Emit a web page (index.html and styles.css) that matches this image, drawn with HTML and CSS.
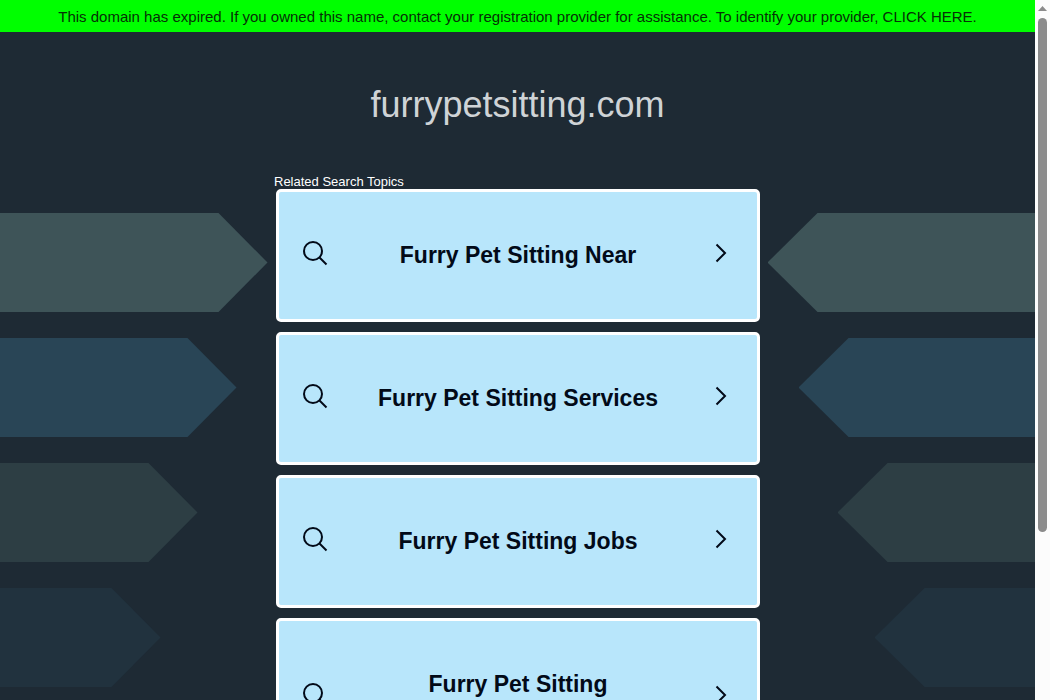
FILE: index.html
```html
<!DOCTYPE html>
<html lang="en">
<head>
<meta charset="utf-8">
<title>furrypetsitting.com</title>
<link rel="stylesheet" href="styles.css">
</head>
<body>
<svg class="sprite" aria-hidden="true">
  <symbol id="search" viewBox="0 0 26 26"><circle cx="11" cy="11" r="9" /><path d="M17.5 17.5 24.5 24.5" /></symbol>
  <symbol id="chevron" viewBox="0 0 12 20"><path d="M1.5 1.5 10 10 1.5 18.5" /></symbol>
</svg>
<div class="shell">
  <div class="page">
    <div class="backdrop" aria-hidden="true">
      <div class="band band-1"><span class="arrow"></span><span class="arrow arrow-left"></span></div>
      <div class="band band-2"><span class="arrow"></span><span class="arrow arrow-left"></span></div>
      <div class="band band-3"><span class="arrow"></span><span class="arrow arrow-left"></span></div>
      <div class="band band-4"><span class="arrow"></span><span class="arrow arrow-left"></span></div>
    </div>
    <header class="notice">This domain has expired. If you owned this name, contact your registration provider for assistance. To identify your provider, <a href="#">CLICK HERE.</a></header>
    <main class="content">
      <h1 class="domain">furrypetsitting.com</h1>
      <h2 class="caption">Related Search Topics</h2>
      <nav class="topics">
        <a class="topic" href="#"><svg class="icon-search"><use href="#search"/></svg><span class="label">Furry Pet Sitting Near</span><svg class="icon-chevron"><use href="#chevron"/></svg></a>
        <a class="topic" href="#"><svg class="icon-search"><use href="#search"/></svg><span class="label">Furry Pet Sitting Services</span><svg class="icon-chevron"><use href="#chevron"/></svg></a>
        <a class="topic" href="#"><svg class="icon-search"><use href="#search"/></svg><span class="label">Furry Pet Sitting Jobs</span><svg class="icon-chevron"><use href="#chevron"/></svg></a>
        <a class="topic" href="#"><svg class="icon-search"><use href="#search"/></svg><span class="label label-tall">Furry Pet Sitting</span><svg class="icon-chevron"><use href="#chevron"/></svg></a>
      </nav>
    </main>
  </div>
  <div class="scrollbar" aria-hidden="true"><span class="scroll-up"></span><span class="thumb"></span></div>
</div>
</body>
</html>
```
FILE: styles.css
```css
* { box-sizing: border-box; }
body {
  margin: 0;
  font-family: "Liberation Sans", Arial, sans-serif;
}
.sprite { display: none; }
.shell {
  display: grid;
  grid-template-columns: 1fr 15px;
  height: 100vh;
  overflow: hidden;
}
.page {
  position: relative;
  overflow: hidden;
  background: #1e2a34;
}

/* Arrow bands behind the content */
.backdrop {
  position: absolute;
  inset: 0;
  display: flex;
  flex-direction: column;
  gap: 26px;
  padding-top: 213px;
}
.band {
  display: flex;
  flex: none;
  height: 99px;
}
.arrow {
  flex: 1;
  background: currentColor;
  clip-path: polygon(0 0, calc(100% - 49px) 0, 100% 50%, calc(100% - 49px) 100%, 0 100%);
}
.arrow-left {
  clip-path: polygon(50px 0, 100% 0, 100% 100%, 50px 100%, 0 50%);
}
.band-1 { gap: 500px; color: #3e5458; }
.band-2 { gap: 562px; color: #294556; }
.band-3 { gap: 640px; color: #2d3e44; }
.band-4 { gap: 714px; color: #21323e; }

.notice {
  position: relative;
  padding: 9px 8px 7px;
  background: #00ff00;
  color: #063006;
  font-size: 15px;
  line-height: 16px;
  text-align: center;
}
.notice a { color: inherit; text-decoration: none; }

.content {
  position: relative;
  max-width: 487px;
  margin: 0 auto;
}
.domain {
  margin: 0;
  padding: 53px 0 49px;
  color: #cfd3d6;
  font-size: 36px;
  font-weight: 400;
  line-height: 40px;
  text-align: center;
}
.caption {
  margin: 0;
  color: #fff;
  font-size: 13px;
  font-weight: 400;
  line-height: 15px;
}
.topics {
  display: grid;
  gap: 10px;
  padding: 0 1px 0 2px;
}
.topic {
  display: grid;
  grid-template-columns: 34px 1fr 27px;
  align-items: center;
  padding: 50px 30px 50px 23px;
  border: 3px solid #fff;
  border-radius: 5px;
  background: #b8e6fb;
  color: #020a18;
  text-decoration: none;
}
.label {
  font-size: 23px;
  font-weight: 700;
  line-height: 27px;
  text-align: center;
}
.label-tall { min-height: 54px; }
.topic svg {
  margin: -3px 0 3px;
  fill: none;
  stroke: currentColor;
  stroke-width: 2;
}
.icon-search { width: 26px; height: 26px; }
.icon-chevron { width: 12px; height: 20px; justify-self: end; }

.scrollbar {
  display: flex;
  flex-direction: column;
  align-items: center;
  gap: 7px;
  padding-top: 6px;
  background: #fcfcfc;
}
.scroll-up {
  width: 9px;
  height: 5px;
  background: #8b8b8b;
  clip-path: polygon(50% 0, 100% 100%, 0 100%);
}
.thumb {
  width: 9px;
  height: 74%;
  border-radius: 5px;
  background: #8b8b8b;
}
```
